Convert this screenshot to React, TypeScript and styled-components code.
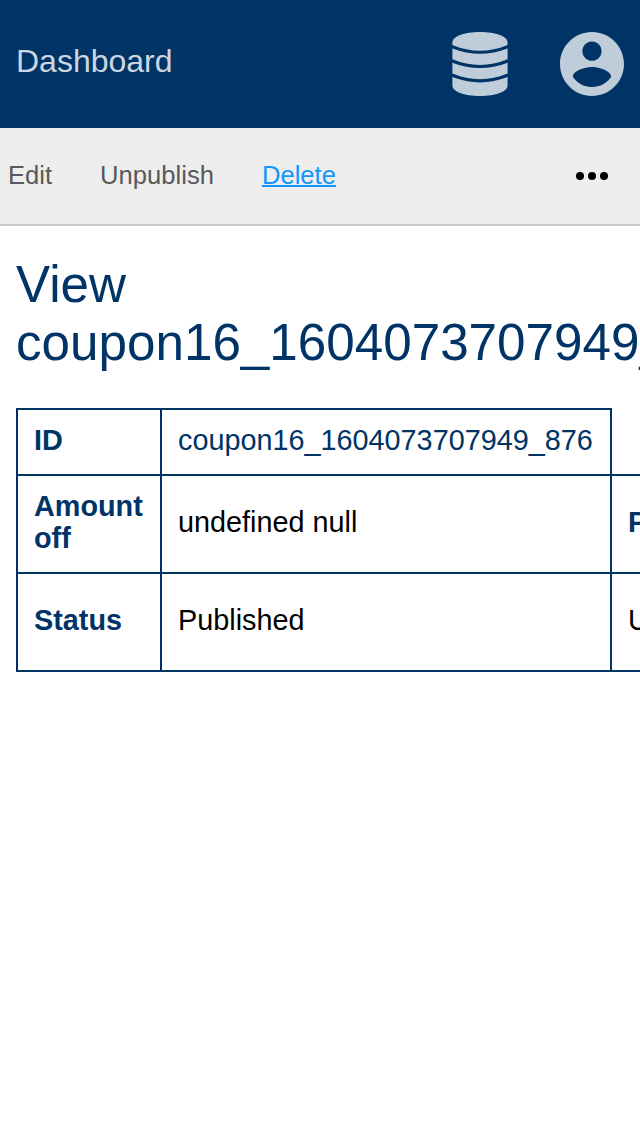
import React from "react";
import styled, { createGlobalStyle } from "styled-components";

const navy = "#003366";

const GlobalStyle = createGlobalStyle`
  *, *::before, *::after { box-sizing: border-box; }
  body {
    margin: 0;
    background: #fff;
    color: #000;
    font-family: "Liberation Sans", Arial, sans-serif;
    overflow: hidden;
  }
`;

const Page = styled.div`
  width: 100%;
  min-height: 100vh;
  overflow: hidden;
`;

const Header = styled.header`
  display: flex;
  align-items: center;
  justify-content: space-between;
  height: 128px;
  padding: 0 16px;
  background: ${navy};
`;

const Brand = styled.a`
  color: #ccd6e0;
  font-size: 32px;
  line-height: 36px;
  padding-bottom: 6px;
`;

const HeaderIcons = styled.div`
  display: flex;
  gap: 52px;
`;

const HeaderIcon = styled.svg`
  display: block;
  height: 64px;
  fill: #bfccd9;
`;

const Toolbar = styled.nav`
  display: flex;
  align-items: center;
  gap: 48px;
  height: 98px;
  padding: 0 32px 0 8px;
  background: #eee;
  border-bottom: 2px solid #ccc;
`;

const Action = styled.a<{ $active?: boolean }>`
  padding-bottom: 2px;
  font-size: 25.6px;
  line-height: 30px;
  color: ${(p) => (p.$active ? "#1296fb" : "#595959")};
  text-decoration: ${(p) => (p.$active ? "underline 2px" : "none")};
`;

const MoreIcon = styled.svg`
  display: block;
  margin-left: auto;
`;

const Content = styled.main`
  padding: 30px 16px 0;
`;

const Title = styled.h1`
  margin: 0 0 36px;
  color: ${navy};
  font-size: 51.2px;
  font-weight: 400;
  line-height: 58px;
`;

const Table = styled.table`
  width: 1000px;
  table-layout: fixed;
  border-collapse: collapse;
  font-size: 28.8px;
  line-height: 32px;
`;

const Column = styled.col<{ $width: number }>`
  width: ${(p) => p.$width}px;
`;

const Row = styled.tr<{ $height: number }>`
  height: ${(p) => p.$height}px;
`;

const Cell = styled.td<{ $navy?: boolean }>`
  padding: 0 16px 4px;
  border: 2px solid ${navy};
  color: ${(p) => (p.$navy ? navy : "#000")};
  text-align: left;
  vertical-align: middle;
`;

const HeadCell = styled(Cell).attrs({ as: "th", $navy: true })`
  font-weight: 700;
`;

export default function App() {
  return (
    <Page>
      <GlobalStyle />
      <Header>
        <Brand>Dashboard</Brand>
        <HeaderIcons>
          <HeaderIcon width="56" viewBox="0 0 56 64">
            <path d="M.4 10.500C.4 4.500 12 0 28 0s27.600 4.500 27.600 10.500V13Q28 24.600 .4 13z" />
            <path d="M.4 16.500Q28 27.100 55.600 16.500V27.300Q28 38.700 .4 27.300z" />
            <path d="M.4 30.700Q28 41.500 55.600 30.700V41.600Q28 53 .4 41.600z" />
            <path d="M.4 45Q28 55.800 55.600 45V53.500C55.600 59.500 44 64 28 64S.4 59.500 .4 53.500z" />
          </HeaderIcon>
          <HeaderIcon width="64" viewBox="2 2 20 20">
            <path d="M12 2C6.480 2 2 6.480 2 12s4.480 10 10 10 10-4.480 10-10S17.520 2 12 2zm0 3c1.660 0 3 1.340 3 3s-1.340 3-3 3-3-1.340-3-3 1.340-3 3-3zm0 14.200c-2.500 0-4.710-1.280-6-3.220.03-1.990 4-3.080 6-3.080 1.990 0 5.970 1.090 6 3.080-1.290 1.940-3.500 3.220-6 3.220z" />
          </HeaderIcon>
        </HeaderIcons>
      </Header>
      <Toolbar>
        <Action>Edit</Action>
        <Action>Unpublish</Action>
        <Action $active>Delete</Action>
        <MoreIcon width="32" height="8" viewBox="0 0 32 8">
          <circle cx="4" cy="4" r="4" />
          <circle cx="16" cy="4" r="4" />
          <circle cx="28" cy="4" r="4" />
        </MoreIcon>
      </Toolbar>
      <Content>
        <Title>View coupon16_1604073707949_876</Title>
        <Table>
          <colgroup>
            <Column $width={144} />
            <Column $width={450} />
            <Column $width={406} />
          </colgroup>
          <tbody>
            <Row $height={66}>
              <HeadCell>ID</HeadCell>
              <Cell $navy>coupon16_1604073707949_876</Cell>
            </Row>
            <Row $height={98}>
              <HeadCell>Amount off</HeadCell>
              <Cell>undefined null</Cell>
              <HeadCell>P</HeadCell>
            </Row>
            <Row $height={98}>
              <HeadCell>Status</HeadCell>
              <Cell>Published</Cell>
              <Cell>U</Cell>
            </Row>
          </tbody>
        </Table>
      </Content>
    </Page>
  );
}
